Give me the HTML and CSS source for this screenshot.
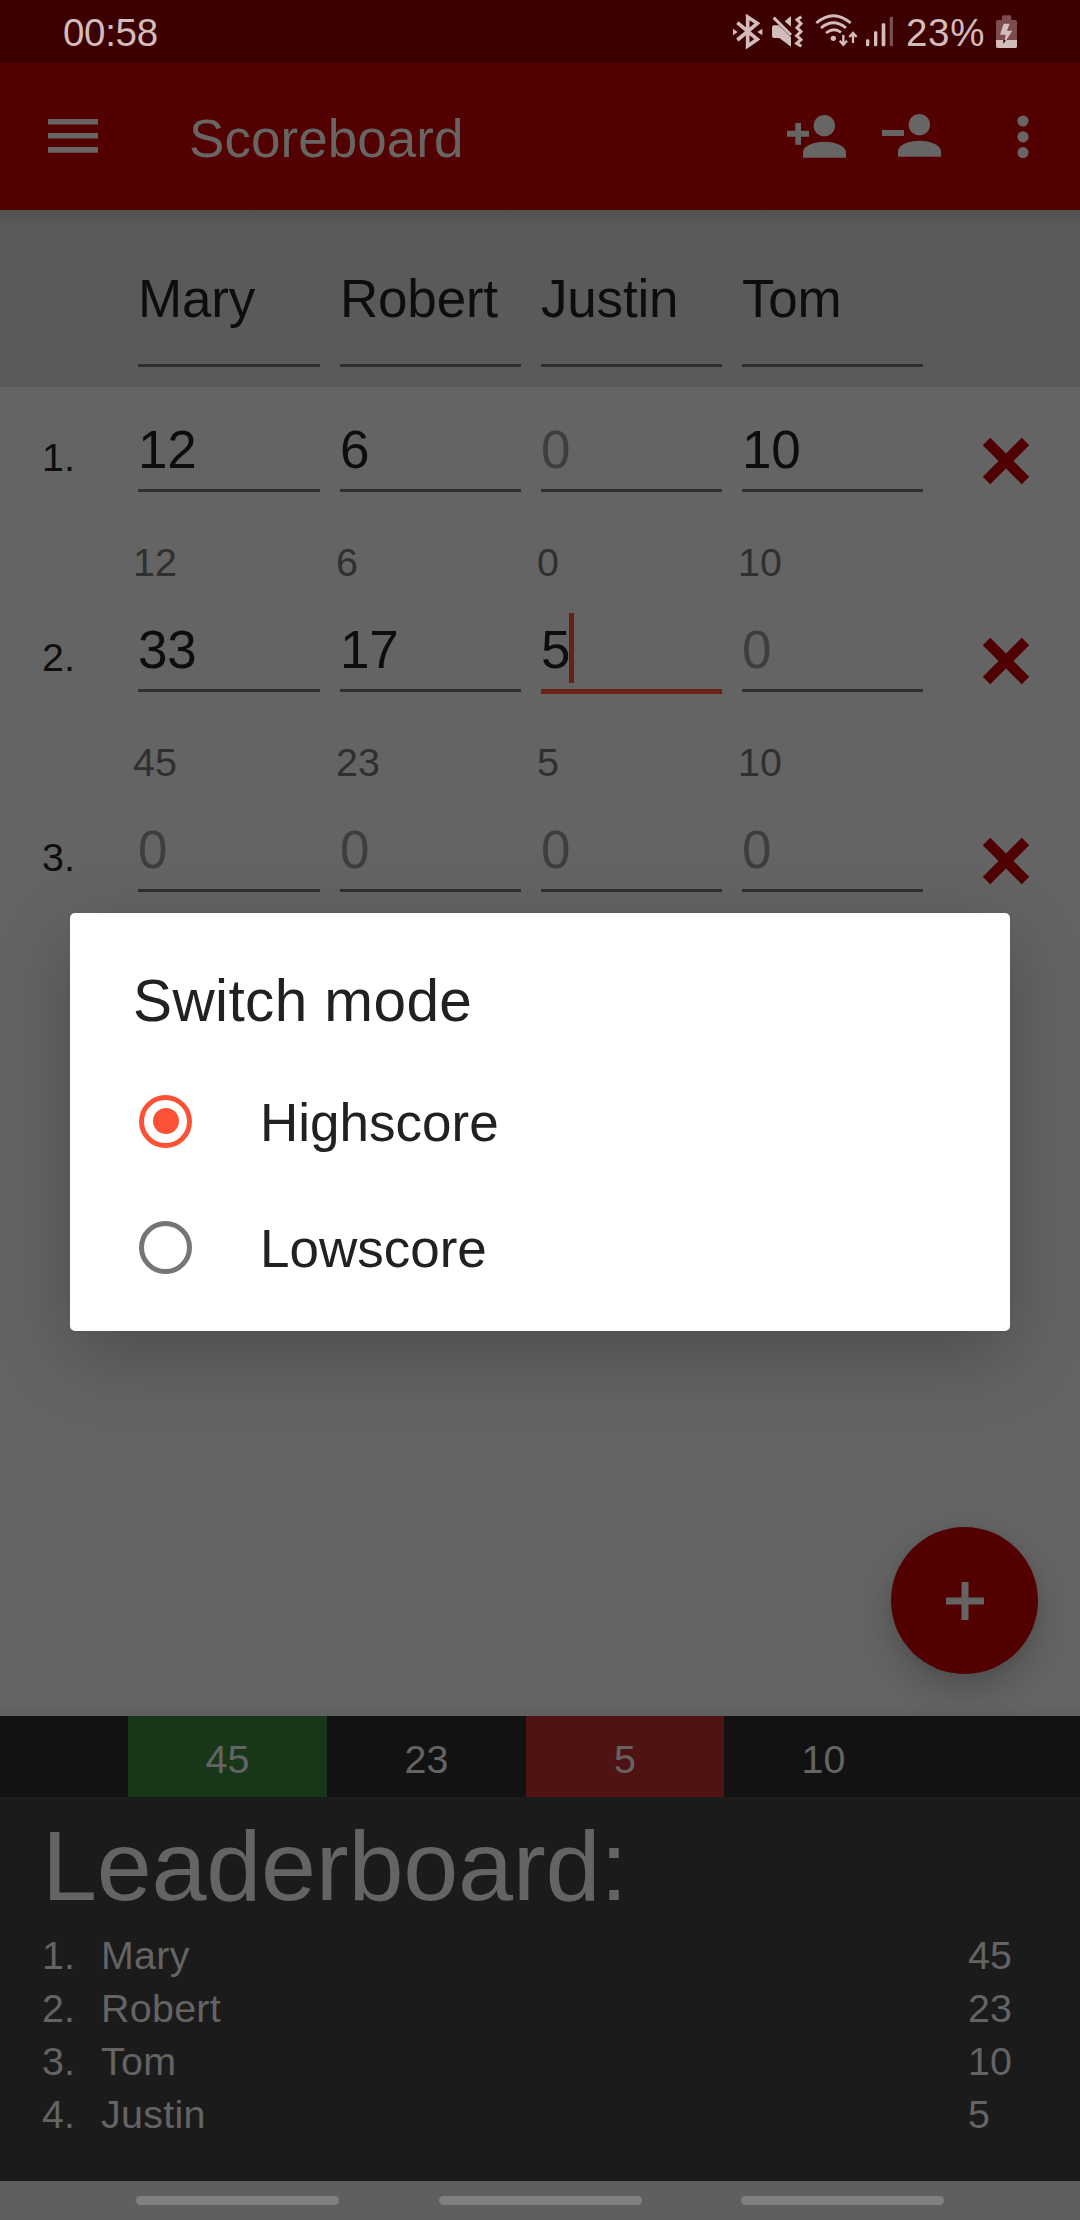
FILE: index.html
```html
<!DOCTYPE html>
<html lang="en">
<head>
<meta charset="utf-8">
<title>Scoreboard</title>
<link rel="stylesheet" href="styles.css">
</head>
<body>
<div class="screen">
  <header class="status">
    <span class="clock">00:58</span>
    <div class="status-icons">
      <svg class="ic-bt" viewBox="99 42 90 105" width="30" height="35"><path d="M112 68L172 118L143 138V51L172 70L112 120" fill="none" stroke="currentColor" stroke-width="11"/><path d="M99 86l14 10-14 10zM187 86l-15 10 15 10z" fill="currentColor"/></svg>
      <svg class="ic-mute" viewBox="213 42 96 105" width="32" height="35"><path d="M216 82q0-6 6-6h14l37 36v28l-35-26h-16q-6 0-6-6zM273 48v32l-19-16z" fill="currentColor"/><path d="M221 53l52 52" stroke="currentColor" stroke-width="9"/><path d="M304 50L291 59L303 71L291 83L303 95L290 107L303 119L290 130L304 139" fill="none" stroke="currentColor" stroke-width="9"/></svg>
      <svg class="ic-wifi" viewBox="345 39 129 108" width="43" height="36"><g fill="none" stroke="currentColor" stroke-width="8.5"><path d="M349 69Q400 25 452 69"/><path d="M363 84Q400 53 438 84"/><path d="M378 99Q400 81 423 97"/><path d="M430 105v28M419 122l11 12 11-12M459 129v-29M448 111l11-12 11 12" stroke-width="7"/></g><circle cx="400" cy="115" r="8" fill="currentColor"/></svg>
      <svg class="ic-signal" viewBox="495 42 87 105" width="29" height="35"><g fill="currentColor"><rect x="498" y="118" width="10" height="21" rx="4"/><rect x="522" y="94" width="10" height="45" rx="4"/><rect x="545" y="70" width="11" height="69" rx="4"/><rect x="569" y="50" width="10" height="89" rx="4" opacity=".42"/></g></svg>
      <span class="percent">23%</span>
      <svg class="ic-bat" viewBox="885 42 69 105" width="23" height="35"><path d="M906 60V50q0-4 4-4h20q4 0 4 4v10h12q5 0 5 5v56h-63V65q0-5 5-5z" fill="#7c4b4d"/><path d="M888 120h63v19q0 5-5 5h-53q-5 0-5-5z" fill="currentColor"/><path d="M911 71h18l-8 21h16l-25 39 5-27h-17z" fill="currentColor"/><path d="M910 120h8l-8 12z" fill="#1d0000"/></svg>
    </div>
  </header>

  <nav class="appbar">
    <svg class="ic-menu" viewBox="0 0 50 34" width="50" height="34" fill="currentColor"><path d="M0 0h50v5.6H0zM0 14h50v5.6H0zM0 28h50v5.8H0z"/></svg>
    <h1 class="title">Scoreboard</h1>
    <svg class="ic-add" viewBox="261 342 177 135" width="59" height="45" fill="currentColor"><circle cx="373" cy="377" r="32"/><path d="M309 473V456C309 438 339 425 373 425S438 438 438 456V473zM286 369h17v23h24v18h-24v24h-17v-24h-25v-18h25z"/></svg>
    <svg class="ic-remove" viewBox="546 342 177 135" width="59" height="45" fill="currentColor"><circle cx="658" cy="374" r="32"/><path d="M594 470V453C594 435 624 422 658 422S723 435 723 453V470zM546 390h66v18h-66z"/></svg>
    <svg class="ic-more" viewBox="0 0 12 44" width="12" height="44" fill="currentColor"><circle cx="6" cy="6" r="5.6"/><circle cx="6" cy="21.8" r="5.6"/><circle cx="6" cy="37.6" r="5.6"/></svg>
  </nav>

  <section class="names grid">
    <span></span>
    <div class="field">Mary</div><div class="field">Robert</div><div class="field">Justin</div><div class="field">Tom</div>
  </section>

  <main class="rounds">
    <div class="round grid">
      <span class="num">1.</span>
      <div class="field">12</div><div class="field">6</div><div class="field hint">0</div><div class="field">10</div>
      <svg class="del" viewBox="0 0 48 48" width="48" height="48"><path d="M4.500 4.500L43.500 43.500M43.500 4.500L4.500 43.500"/></svg>
      <span class="sub first">12</span><span class="sub">6</span><span class="sub">0</span><span class="sub">10</span>
    </div>
    <div class="round grid">
      <span class="num">2.</span>
      <div class="field">33</div><div class="field">17</div><div class="field focus">5<i class="caret"></i></div><div class="field hint">0</div>
      <svg class="del" viewBox="0 0 48 48" width="48" height="48"><path d="M4.500 4.500L43.500 43.500M43.500 4.500L4.500 43.500"/></svg>
      <span class="sub first">45</span><span class="sub">23</span><span class="sub">5</span><span class="sub">10</span>
    </div>
    <div class="round grid">
      <span class="num">3.</span>
      <div class="field hint">0</div><div class="field hint">0</div><div class="field hint">0</div><div class="field hint">0</div>
      <svg class="del" viewBox="0 0 48 48" width="48" height="48"><path d="M4.500 4.500L43.500 43.500M43.500 4.500L4.500 43.500"/></svg>
    </div>
    <div class="fab"><svg viewBox="0 0 38 38" width="38" height="38"><path d="M19 0V38M0 19H38" stroke="#646464" stroke-width="7"/></svg></div>
  </main>

  <section class="totals">
    <span></span><span class="best">45</span><span>23</span><span class="worst">5</span><span>10</span>
  </section>

  <section class="board">
    <h2 class="board-title">Leaderboard:</h2>
    <div class="rank"><span>1.</span><span class="who">Mary</span><span>45</span></div>
    <div class="rank"><span>2.</span><span class="who">Robert</span><span>23</span></div>
    <div class="rank"><span>3.</span><span class="who">Tom</span><span>10</span></div>
    <div class="rank"><span>4.</span><span class="who">Justin</span><span>5</span></div>
  </section>

  <footer class="sysnav"><i></i><i></i><i></i></footer>

  <div class="dialog">
    <h3 class="dialog-title">Switch mode</h3>
    <div class="option"><i class="radio on"></i><span>Highscore</span></div>
    <div class="option"><i class="radio"></i><span>Lowscore</span></div>
  </div>
</div>
</body>
</html>
```
FILE: styles.css
```css
* { box-sizing: border-box; margin: 0; padding: 0; }
body { width: 1080px; height: 2220px; overflow: hidden; font-family: "Liberation Sans", Arial, sans-serif; font-weight: 400; }
h1, h2, h3 { font-weight: 400; }
svg { display: block; flex: none; }
.screen { position: relative; width: 1080px; height: 2220px; display: flex; flex-direction: column; background: #646464; }

.status { height: 63px; background: #3d0000; color: #d3bcbc; display: flex; justify-content: space-between; padding: 0 62px 0 63px; font-size: 38.5px; line-height: 66px; letter-spacing: -0.3px; }
.status-icons { display: flex; align-items: flex-start; }
.status-icons svg { margin-top: 14px; }
.status-icons .ic-mute { margin-left: 8px; }
.status-icons .ic-wifi { margin-left: 12px; margin-top: 13px; }
.status-icons .ic-signal { margin-left: 7px; }
.percent { width: 80px; margin-left: 12px; white-space: nowrap; letter-spacing: 0.7px; }
.status-icons .ic-bat { margin-left: 9px; }

.appbar { height: 147px; background: #520000; color: #686565; display: flex; align-items: flex-start; padding-left: 48px; }
.ic-menu { margin-top: 56px; }
.title { width: 280px; margin-left: 91px; font-size: 53px; line-height: 151px; letter-spacing: 0.05px; }
.ic-add { margin-left: 318px; margin-top: 51px; }
.ic-remove { margin-left: 36px; margin-top: 51px; }
.ic-more { margin-left: 75.500px; margin-top: 51.700px; }

.grid { display: grid; grid-template-columns: 118px 182px 181px 181px 181px 117px; column-gap: 20px; align-items: start; align-content: start; }
.field { position: relative; padding-top: 24px; font-size: 53px; line-height: 78px; color: #0d0d0d; border-bottom: 3px solid #2f2f2f; letter-spacing: -0.2px; }
.names { height: 177px; background: linear-gradient(#525252, #5a5a5a 18px); }
.names .field { line-height: 130px; }
.rounds { position: relative; height: 1329px; background: linear-gradient(#646464 1316px, #5f5f5f); }
.round { height: 200px; grid-template-rows: 105px 95px; }
.num { padding: 24px 0 0 42px; font-size: 39.400px; line-height: 92px; color: #0d0d0d; }
.hint { color: #3e3e3e; }
.focus { border-bottom: 5px solid #6a2216; margin-bottom: -2px; }
.caret { position: absolute; left: 28px; top: 26px; width: 5px; height: 70px; background: #652318; }
.del { margin: 49.500px 0 0 39.300px; fill: none; stroke: #500000; stroke-width: 10.500px; }
.sub { margin-left: -4px; padding-top: 45px; font-size: 39.400px; line-height: 50px; color: #2f2f2f; }
.sub.first { grid-column: 2; margin-left: -5px; }

.fab { position: absolute; left: 891px; top: 1140px; width: 147px; height: 147px; border-radius: 50%; background: #520000; display: flex; align-items: center; justify-content: center; box-shadow: 0 16px 36px rgba(0, 0, 0, .2), 0 2px 12px rgba(0, 0, 0, .06); }

.totals { height: 81px; background: #121212; color: #646464; display: grid; grid-template-columns: 128px 199px 199px 198px 199px; font-size: 39.400px; line-height: 86px; text-align: center; }
.totals span { height: 81px; }
.totals .best { background: #173718; }
.totals .worst { background: #501313; }

.board { height: 384px; background: #1b1b1b; color: #646464; padding-left: 42px; }
.board-title { height: 132px; font-size: 99px; line-height: 137px; letter-spacing: -0.3px; }
.rank { display: grid; grid-template-columns: 58px 868px 80px; font-size: 39.400px; line-height: 53px; }
.who { padding-left: 1px; letter-spacing: 0.3px; }

.sysnav { height: 39px; background: #5f5f5f; display: flex; gap: 99.500px; padding: 15px 0 0 136px; }
.sysnav i { width: 203px; height: 9px; border-radius: 5px; background: #808080; }

.dialog { position: absolute; left: 70px; top: 913px; width: 940px; height: 418px; padding: 48px 0 0 62px; background: #fff; border-radius: 5px; color: #212121; box-shadow: 0 24px 80px rgba(0, 0, 0, .24); }
.dialog-title { height: 97px; padding-left: 1px; font-size: 58.500px; line-height: 80px; letter-spacing: 0.4px; }
.option { height: 126px; display: flex; align-items: center; font-size: 53px; line-height: 120px; }
.option span { margin-left: 68px; padding-top: 4px; }
.radio { position: relative; width: 53px; height: 53px; margin-left: 7px; border: 5px solid #757575; border-radius: 50%; display: flex; align-items: center; justify-content: center; }
.radio.on { border-color: #fd5135; }
.radio.on::after { content: ""; width: 26px; height: 26px; border-radius: 50%; background: #fd5135; }
```
